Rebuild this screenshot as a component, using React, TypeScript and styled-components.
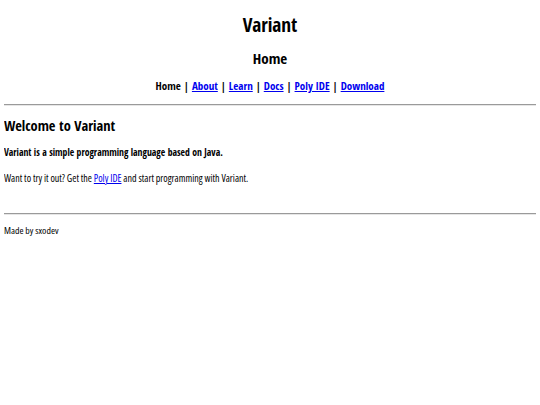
import styled, { createGlobalStyle } from 'styled-components';

const Global = createGlobalStyle`
  body {
    margin: 4px;
    background: #ffffff;
    color: #000000;
    font-family: "Open Sans Condensed", "Roboto Condensed", "Liberation Sans", sans-serif;
  }
  a {
    color: #0000ee;
  }
`;

const Header = styled.header`
  text-align: center;
`;

const Title = styled.h1`
  font-size: 19.3px;
  line-height: 24px;
  margin: 9px 0 0;
`;

const Subtitle = styled.h2`
  font-size: 15px;
  line-height: 20px;
  margin: 11px 0 0;
`;

const Nav = styled.nav`
  font-size: 11px;
  font-weight: bold;
  line-height: 16px;
  margin: 10px 0 0;
`;

const Rule = styled.hr<{ $top: number }>`
  border: none;
  border-top: 1px solid #9a9a9a;
  border-bottom: 1px solid #e6e6e6;
  margin: ${(p) => p.$top}px 0 0;
`;

const Main = styled.main`
  padding-top: 10px;
`;

const Heading = styled.h2`
  font-size: 14.4px;
  line-height: 20px;
  margin: 0;
`;

const Lead = styled.p`
  font-size: 9.7px;
  font-weight: bold;
  line-height: 14px;
  margin: 10px 0 0;
`;

const Text = styled.p`
  font-family: "Open Sans", sans-serif;
  font-stretch: 75%;
  font-weight: 400;
  font-size: 10px;
  line-height: 14px;
  margin: 11px 0 0;
`;

const Footer = styled.footer`
  font-family: "Open Sans", sans-serif;
  font-stretch: 75%;
  font-weight: 400;
  font-size: 9.8px;
  line-height: 14px;
  padding-top: 9px;
`;

const links = ['About', 'Learn', 'Docs', 'Poly IDE', 'Download'];

export default function App() {
  return (
    <>
      <Global />
      <Header>
        <Title>Variant</Title>
        <Subtitle>Home</Subtitle>
        <Nav>
          Home
          {links.map((l) => (
            <span key={l}>
              {' | '}
              <a href="#">{l}</a>
            </span>
          ))}
        </Nav>
      </Header>
      <Rule $top={10} />
      <Main>
        <Heading>Welcome to Variant</Heading>
        <Lead>Variant is a simple programming language based on Java.</Lead>
        <Text>
          Want to try it out? Get the <a href="#">Poly IDE</a> and start programming with Variant.
        </Text>
      </Main>
      <Rule $top={28} />
      <Footer>Made by sxodev</Footer>
    </>
  );
}
